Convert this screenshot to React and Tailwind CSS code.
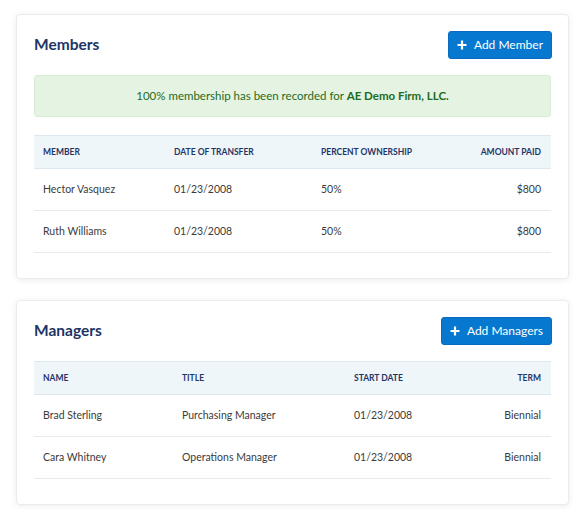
import React from 'react';

const members = [
  { name: 'Hector Vasquez', date: '01/23/2008', pct: '50%', paid: '$800' },
  { name: 'Ruth Williams', date: '01/23/2008', pct: '50%', paid: '$800' },
];

const managers = [
  { name: 'Brad Sterling', title: 'Purchasing Manager', start: '01/23/2008', term: 'Biennial' },
  { name: 'Cara Whitney', title: 'Operations Manager', start: '01/23/2008', term: 'Biennial' },
];

function PlusIcon() {
  return (
    <svg width="10" height="10" viewBox="0 0 10 10" className="shrink-0">
      <path d="M5 0.5v9M0.5 5h9" stroke="white" strokeWidth="2.2" />
    </svg>
  );
}

function AddButton({ label }) {
  return (
    <button className="h-[28px] -mr-[1px] flex items-center gap-[7px] px-[8px] rounded-[3px] bg-[#0678d0] border border-[#0a6cc0] text-white text-[12px]">
      <PlusIcon />
      <span>{label}</span>
    </button>
  );
}

export default function App() {
  return (
    <div className="min-h-[522px] bg-white pt-[14px] px-[16px]" style={{ fontFamily: 'Lato, "Noto Sans", sans-serif' }}>
      {/* Members */}
      <section className="w-[553px] rounded-[4px] bg-white border border-[#e9ecef] shadow-[0_1px_6px_rgba(0,0,0,0.08)] px-[17px] pt-[16px] pb-[25px]">
        <div className="flex items-center justify-between">
          <h2 className="text-[15.5px] font-bold text-[#1d3564]">Members</h2>
          <AddButton label="Add Member" />
        </div>

        <div className="mt-[16px] h-[42px] flex items-center justify-center rounded-[3px] bg-[#e5f3e3] border border-[#d7ecd3] text-[11.5px] text-[#1d6b1d]">
          <span>
            100% membership has been recorded for <b className="font-bold">AE Demo Firm, LLC.</b>
          </span>
        </div>

        <table className="mt-[18px] w-full table-fixed border-collapse text-[10.5px]">
          <colgroup>
            <col className="w-[140px]" />
            <col className="w-[147px]" />
            <col className="w-[120px]" />
            <col />
          </colgroup>
          <thead>
            <tr className="h-[33px] bg-[#eff6fa] border-t border-b border-[#dfe7ee] text-[#1f3566] text-[8.5px] font-bold uppercase">
              <th className="pl-[9px] text-left">Member</th>
              <th className="text-left">Date of Transfer</th>
              <th className="text-left">Percent Ownership</th>
              <th className="pr-[10px] text-right">Amount Paid</th>
            </tr>
          </thead>
          <tbody className="text-[#3b3b3b]">
            {members.map((m) => (
              <tr key={m.name} className="h-[42px] border-b border-[#e6e9ee]">
                <td className="pl-[9px]">{m.name}</td>
                <td>{m.date}</td>
                <td>{m.pct}</td>
                <td className="pr-[10px] text-right">{m.paid}</td>
              </tr>
            ))}
          </tbody>
        </table>
      </section>

      {/* Managers */}
      <section className="mt-[21px] w-[553px] rounded-[4px] bg-white border border-[#e9ecef] shadow-[0_1px_6px_rgba(0,0,0,0.08)] px-[17px] pt-[16px] pb-[25px]">
        <div className="flex items-center justify-between">
          <h2 className="text-[15.5px] font-bold text-[#1d3564]">Managers</h2>
          <AddButton label="Add Managers" />
        </div>

        <table className="mt-[16px] w-full table-fixed border-collapse text-[10.5px]">
          <colgroup>
            <col className="w-[148px]" />
            <col className="w-[172px]" />
            <col className="w-[110px]" />
            <col />
          </colgroup>
          <thead>
            <tr className="h-[33px] bg-[#eff6fa] border-t border-b border-[#dfe7ee] text-[#1f3566] text-[8.5px] font-bold uppercase">
              <th className="pl-[9px] text-left">Name</th>
              <th className="text-left">Title</th>
              <th className="text-left">Start Date</th>
              <th className="pr-[10px] text-right">Term</th>
            </tr>
          </thead>
          <tbody className="text-[#3b3b3b]">
            {managers.map((m) => (
              <tr key={m.name} className="h-[42px] border-b border-[#e6e9ee]">
                <td className="pl-[9px]">{m.name}</td>
                <td>{m.title}</td>
                <td>{m.start}</td>
                <td className="pr-[10px] text-right">{m.term}</td>
              </tr>
            ))}
          </tbody>
        </table>
      </section>
    </div>
  );
}
